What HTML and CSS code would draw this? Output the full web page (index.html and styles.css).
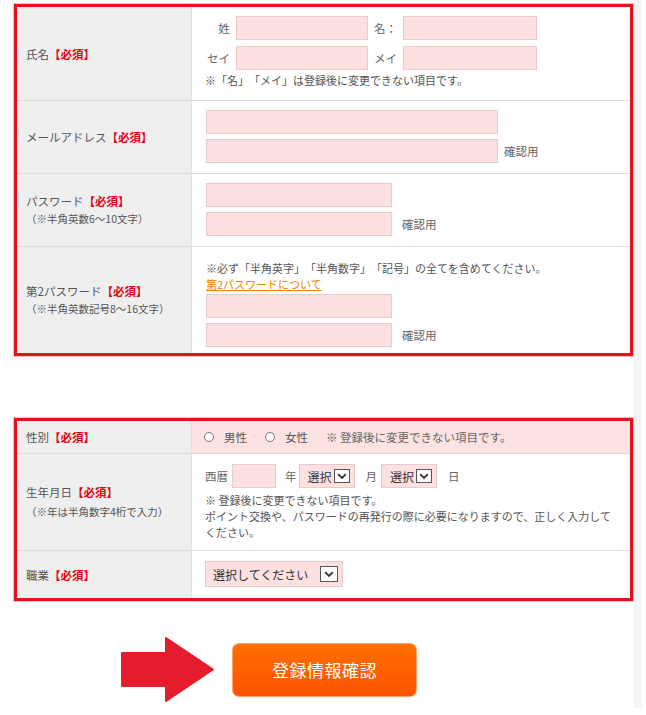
FILE: index.html
```html
<!DOCTYPE html>
<html lang="ja">
<head>
<meta charset="utf-8">
<title>会員登録</title>
<link rel="stylesheet" href="styles.css">
</head>
<body>
<div class="page">
  <main class="content">
    <section class="form-box">
      <div class="row row-name">
        <div class="label"><p>氏名<span class="req">【必須】</span></p></div>
        <div class="field">
          <div class="name-grid">
            <span class="nl nl-right">姓</span><input class="input" type="text"><span class="nl">名：</span><input class="input" type="text">
            <span class="nl nl-right">セイ</span><input class="input" type="text"><span class="nl">メイ</span><input class="input" type="text">
          </div>
          <p class="note note-name">※「名」「メイ」は登録後に変更できない項目です。</p>
        </div>
      </div>
      <div class="row row-pair">
        <div class="label"><p>メールアドレス<span class="req">【必須】</span></p></div>
        <div class="field">
          <input class="input w-mail" type="text">
          <div class="pair pair-mail"><input class="input w-mail" type="text"><span class="confirm">確認用</span></div>
        </div>
      </div>
      <div class="row row-pair">
        <div class="label"><p>パスワード<span class="req">【必須】</span></p><p class="sub">（※半角英数6～10文字）</p></div>
        <div class="field">
          <input class="input w-pass" type="password">
          <div class="pair"><input class="input w-pass" type="password"><span class="confirm">確認用</span></div>
        </div>
      </div>
      <div class="row row-pass2">
        <div class="label"><p>第2パスワード<span class="req">【必須】</span></p><p class="sub">（※半角英数記号8～16文字）</p></div>
        <div class="field">
          <p class="note">※必ず「半角英字」「半角数字」「記号」の全てを含めてください。</p>
          <p class="note"><a class="link" href="#">第2パスワードについて</a></p>
          <input class="input w-pass first" type="password">
          <div class="pair"><input class="input w-pass" type="password"><span class="confirm">確認用</span></div>
        </div>
      </div>
    </section>

    <section class="form-box box-profile">
      <div class="row row-gender">
        <div class="label"><p>性別<span class="req">【必須】</span></p></div>
        <div class="field field-pink">
          <span class="radio"></span><span class="opt">男性</span>
          <span class="radio"></span><span class="opt">女性</span>
          <span class="gender-note">※ 登録後に変更できない項目です。</span>
        </div>
      </div>
      <div class="row row-birth">
        <div class="label label-birth"><p>生年月日<span class="req">【必須】</span></p><p class="sub">（※年は半角数字4桁で入力）</p></div>
        <div class="field">
          <div class="date">
            <span class="dl">西暦</span>
            <input class="input w-year" type="text">
            <span class="dl dl-unit">年</span>
            <span class="select"><span class="sel-text">選択</span><span class="sel-btn"><svg width="10" height="7" viewBox="0 0 10 7"><path d="M1.2 1.2 L5 5 L8.8 1.2" fill="none" stroke="#333" stroke-width="1.8"/></svg></span></span>
            <span class="dl dl-unit2">月</span>
            <span class="select"><span class="sel-text">選択</span><span class="sel-btn"><svg width="10" height="7" viewBox="0 0 10 7"><path d="M1.2 1.2 L5 5 L8.8 1.2" fill="none" stroke="#333" stroke-width="1.8"/></svg></span></span>
            <span class="dl dl-unit2">日</span>
          </div>
          <p class="note note-birth">※ 登録後に変更できない項目です。<br>ポイント交換や、パスワードの再発行の際に必要になりますので、正しく入力して<br>ください。</p>
        </div>
      </div>
      <div class="row row-job">
        <div class="label"><p>職業<span class="req">【必須】</span></p></div>
        <div class="field">
          <span class="select select-job"><span class="sel-text">選択してください</span><span class="sel-btn"><svg width="10" height="7" viewBox="0 0 10 7"><path d="M1.2 1.2 L5 5 L8.8 1.2" fill="none" stroke="#333" stroke-width="1.8"/></svg></span></span>
        </div>
      </div>
    </section>

    <div class="submit-row">
      <svg class="arrow" width="96" height="67" viewBox="0 0 96 67">
        <polygon points="2,17 46,17 46,2 93,33.5 46,65 46,50 2,50" fill="#e41c2d" stroke="#e41c2d" stroke-width="2" stroke-linejoin="round"/>
      </svg>
      <button class="submit" type="button">登録情報確認</button>
    </div>
  </main>
  <div class="rail"></div>
</div>
</body>
</html>
```

FILE: styles.css
```css
* { box-sizing: border-box; }
html, body { margin: 0; padding: 0; background: #fff; }
body {
  font-family: "Noto Sans CJK JP", "Noto Sans", sans-serif;
  color: #555;
  font-size: 11px;
  text-spacing-trim: space-all;
}
p { margin: 0; }

.page { display: flex; width: 646px; height: 715px; }
.content { width: 634px; padding: 4px 0 0 14px; }
.rail { width: 7px; height: 708px; background: #f4f4f4; }

.form-box {
  width: 619px;
  border: 3px solid #e3121e;
  box-shadow: 0 0 0 1px rgba(232, 60, 70, 0.35);
  background: #fff;
}
.box-profile { margin-top: 62px; }

.row { display: flex; border-bottom: 1px solid #dcdcdc; }
.row:last-child { border-bottom: 0; }

.label {
  width: 175px;
  flex: none;
  background: #efefef;
  border-right: 1px solid #e2e2e2;
  padding-left: 9px;
  display: flex;
  flex-direction: column;
  justify-content: center;
  font-size: 11.5px;
  line-height: 18px;
  color: #555;
}
.label .sub { font-size: 10.5px; }
.label-birth { line-height: 19px; }
.req { color: #e50012; font-weight: bold; }

.field { flex: 1; }

.input {
  display: block;
  height: 24px;
  margin: 0;
  padding: 0;
  background: #fde1e1;
  border: 1px solid #ebcaca;
  border-radius: 0;
  font: inherit;
  outline: none;
}

.note { font-size: 11px; line-height: 16px; color: #555; white-space: nowrap; }

/* name */
.row-name .field { padding: 9px 12px 12px 13px; }
.name-grid {
  display: grid;
  grid-template-columns: 25px 132px 23px 134px;
  column-gap: 6px;
  row-gap: 6px;
  align-items: center;
}
.name-grid .input { width: 100%; }
.nl { font-size: 11.5px; color: #666; white-space: nowrap; }
.nl-right { text-align: right; }
.note-name { margin-top: 2px; }

/* pairs */
.row-pair .field { padding: 9px 12px 10px 14px; }
.pair { display: flex; align-items: center; gap: 10px; margin-top: 5px; }
.pair-mail { gap: 6px; }
.confirm { font-size: 11.5px; color: #666; }
.w-mail { width: 292px; }
.w-pass { width: 186px; }

.row-pass2 .field { padding: 13px 12px 6px 14px; }
.row-pass2 .first { margin-top: 2px; }
.link { color: #f08200; text-decoration: underline; }

/* gender */
.row-gender { height: 33px; }
.field-pink {
  background: #fde2e2;
  display: flex;
  align-items: center;
  padding-left: 12px;
  font-size: 11.5px;
}
.radio {
  width: 10px; height: 10px;
  border: 1px solid #777;
  border-radius: 50%;
  background: #fff;
  flex: none;
}
.opt { margin-left: 10px; margin-right: 18px; color: #555; }
.gender-note { color: #666; }

/* birth */
.row-birth .field { padding: 10px 10px 10px 13px; }
.date { display: flex; align-items: center; height: 24px; font-size: 11.5px; color: #666; }
.dl { white-space: nowrap; }
.date .w-year { width: 44px; margin-left: 4px; }
.dl-unit { margin-left: 9px; margin-right: 2px; }
.dl-unit2 { margin-left: 11px; margin-right: 4px; }
.note-birth { margin-top: 4px; }

.select {
  display: flex;
  align-items: center;
  height: 24px;
  background: #fde1e1;
  border: 1px solid #ebcaca;
  padding: 0 4px 0 8px;
  font-size: 12px;
  color: #333;
  flex: none;
}
.sel-btn {
  width: 16px;
  height: 14px;
  margin-left: 2px;
  border: 1px solid #555;
  background: #fff;
  display: flex;
  align-items: center;
  justify-content: center;
}
.row-job .field { padding: 10px 10px 11px 13px; }
.select-job { display: inline-flex; height: 26px; padding-left: 7px; }
.select-job .sel-btn { width: 18px; height: 16px; margin-left: 12px; }

/* submit */
.submit-row { display: flex; align-items: center; margin-top: 35px; padding-left: 106px; }
.arrow { display: block; flex: none; }
.submit {
  margin-left: 16px;
  width: 185px;
  height: 54px;
  border: 1px solid #ffa466;
  border-radius: 7px;
  background: linear-gradient(#ff7100, #ff5100);
  color: #fff;
  font-family: "Noto Sans CJK JP", sans-serif;
  font-size: 17px;
  letter-spacing: 0.5px;
  padding: 0;
}
```
